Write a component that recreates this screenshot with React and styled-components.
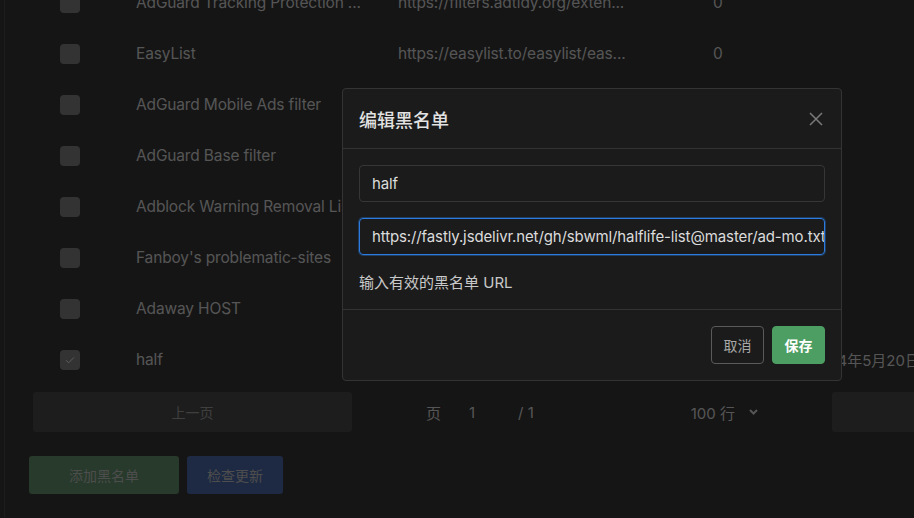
import styled, { createGlobalStyle } from "styled-components";

const Global = createGlobalStyle`
  html, body {
    margin: 0;
    padding: 0;
    background: #2a2a2a;
    overflow: hidden;
  }
  body {
    font-family: Inter, "Noto Sans CJK SC", sans-serif;
  }
`

const Page = styled.div`
  width: 914px;
  height: 518px;
  display: flex;
  overflow: hidden;
`

const Rail = styled.div`
  width: 4px;
  flex: none;
  border-right: 1px solid #3a3a3a;
`

const Main = styled.div`
  flex: none;
  width: 1150px;
  padding-left: 28px;
`

const Table = styled.div`
  margin-top: -23px;
  width: 1118px;
`

const Row = styled.div`
  display: grid;
  grid-template-columns: 47px 262px 315px 97px 1fr;
  align-items: center;
  height: 51px;
  color: #aaaaaa;
  font-size: 15.5px;
  letter-spacing: -0.15px;
  white-space: nowrap;
`

const Cell = styled.div`
  padding-left: 56px;
`

const DateCell = styled(Cell)`
  font-size: 15px;
  letter-spacing: 0;
`

const CheckCell = styled.div`
  display: flex;
  justify-content: flex-end;
`

const Box = styled.div`
  width: 20px;
  height: 20px;
  border-radius: 4px;
  background: #676767;
  display: flex;
  align-items: center;
  justify-content: center;
`

const Pager = styled.div`
  display: flex;
  align-items: center;
  margin-top: 7px;
  width: 1118px;
  height: 40px;
`

const PageButton = styled.div`
  width: 319px;
  height: 40px;
  border-radius: 3px;
  background: #3a3a3a;
  color: #7e7e7e;
  font-size: 14px;
  display: flex;
  align-items: center;
  justify-content: center;
`

const PagerMid = styled.div`
  flex: 1;
  display: flex;
  align-items: center;
  color: #aaaaaa;
  font-size: 15px;
  padding-left: 74px;
`

const PageInput = styled.span`
  margin-left: 28px;
  width: 49px;
`

const Rows = styled.span`
  margin-left: 157px;
  display: flex;
  align-items: center;
  gap: 14px;
`

const Actions = styled.div`
  display: flex;
  gap: 8px;
  margin: 24px 0 0 -4px;
`

const Action = styled.div`
  height: 38px;
  padding: 0 ${p => p.$pad}px;
  border-radius: 3px;
  background: ${p => p.$bg};
  color: #9a9a9a;
  font-size: 14px;
  display: flex;
  align-items: center;
`

const Backdrop = styled.div`
  position: fixed;
  inset: 0;
  background: rgba(0, 0, 0, 0.5);
`

const Modal = styled.div`
  position: fixed;
  left: 342px;
  top: 88px;
  width: 498px;
  background: #1b1b1b;
  border: 1px solid #343434;
  border-radius: 4px;
`

const Header = styled.div`
  height: 59px;
  display: flex;
  align-items: center;
  justify-content: space-between;
  padding: 0 16px;
  border-bottom: 1px solid #333;
  color: #e2e2e2;
  font-size: 18px;
  font-weight: 500;
`

const Close = styled.div`
  width: 14px;
  height: 14px;
  margin-right: 2px;
  display: flex;
`

const Body = styled.div`
  padding: 16px 16px 14px;
  display: flex;
  flex-direction: column;
  gap: 16px;
`

const Input = styled.div`
  height: 35px;
  border: 1px solid ${p => (p.$focus ? "#2c7be0" : "#363636")};
  box-shadow: ${p => (p.$focus ? "0 0 0 1px rgba(44,123,224,0.35)" : "none")};
  border-radius: 4px;
  padding: 0 12px;
  display: flex;
  align-items: center;
  color: #dcdcdc;
  font-size: 15px;
  letter-spacing: -0.12px;
  white-space: nowrap;
  overflow: hidden;
`

const Help = styled.div`
  color: #c9c9c9;
  font-size: 15px;
  line-height: 24px;
`

const Footer = styled.div`
  border-top: 1px solid #333;
  padding: 16px;
  display: flex;
  justify-content: flex-end;
  gap: 8px;
`

const Btn = styled.div`
  height: 38px;
  width: 53px;
  border-radius: 4px;
  box-sizing: border-box;
  display: flex;
  align-items: center;
  justify-content: center;
  font-size: 14px;
  border: 1px solid ${p => (p.$primary ? "#4c9e63" : "#5a5a5a")};
  background: ${p => (p.$primary ? "#4c9e63" : "transparent")};
  color: ${p => (p.$primary ? "#ffffff" : "#a8a8a8")};
  font-weight: ${p => (p.$primary ? 600 : 400)};
`

const lists = [
  { name: "AdGuard Tracking Protection ...", url: "https://filters.adtidy.org/exten...", count: "0" },
  { name: "EasyList", url: "https://easylist.to/easylist/eas...", count: "0" },
  { name: "AdGuard Mobile Ads filter", url: "https://filters.adtidy.org/exten...", count: "0" },
  { name: "AdGuard Base filter", url: "https://filters.adtidy.org/exten...", count: "0" },
  { name: "Adblock Warning Removal List", url: "https://easylist-downloads.adbl...", count: "0" },
  { name: "Fanboy's problematic-sites", url: "https://secure.fanboy.co.nz/fan...", count: "0" },
  { name: "Adaway HOST", url: "https://adaway.org/hosts.txt", count: "0" },
  { name: "half", url: "https://fastly.jsdelivr.net/gh/...", count: "0", date: "2024年5月20日", checked: true },
]

const App = () => {
  return (
    <>
      <Global />
      <Page>
        <Rail />
        <Main>
          <Table>
            {lists.map((item) => (
              <Row key={item.name}>
                <CheckCell>
                  <Box>
                    {item.checked && (
                      <svg width="12" height="12" viewBox="0 0 12 12">
                        <path d="M2 6.2l2.6 2.6L10 3.4" fill="none" stroke="#bbb" strokeWidth="1" />
                      </svg>
                    )}
                  </Box>
                </CheckCell>
                <Cell>{item.name}</Cell>
                <Cell>{item.url}</Cell>
                <Cell>{item.count}</Cell>
                <DateCell>{item.date}</DateCell>
              </Row>
            ))}
          </Table>
          <Pager>
            <PageButton>上一页</PageButton>
            <PagerMid>
              页
              <PageInput>1</PageInput>
              / 1
              <Rows>
                100 行
                <svg width="9" height="8" viewBox="0 0 9 8">
                  <path d="M1 2l3.5 3.5L8 2" fill="none" stroke="#aaa" strokeWidth="2" />
                </svg>
              </Rows>
            </PagerMid>
            <PageButton>下一页</PageButton>
          </Pager>
          <Actions>
            <Action $bg="#4f7456" $pad={40}>添加黑名单</Action>
            <Action $bg="#3d5586" $pad={20}>检查更新</Action>
          </Actions>
        </Main>
      </Page>
      <Backdrop />
      <Modal>
        <Header>
          编辑黑名单
          <Close>
            <svg width="14" height="14" viewBox="0 0 14 14">
              <path d="M1 1l12 12M13 1L1 13" stroke="#7a7a7a" strokeWidth="1.5" />
            </svg>
          </Close>
        </Header>
        <Body>
          <Input>half</Input>
          <Input $focus>https://fastly.jsdelivr.net/gh/sbwml/halflife-list@master/ad-mo.txt</Input>
          <Help>输入有效的黑名单 URL</Help>
        </Body>
        <Footer>
          <Btn>取消</Btn>
          <Btn $primary>保存</Btn>
        </Footer>
      </Modal>
    </>
  )
}

export default App
